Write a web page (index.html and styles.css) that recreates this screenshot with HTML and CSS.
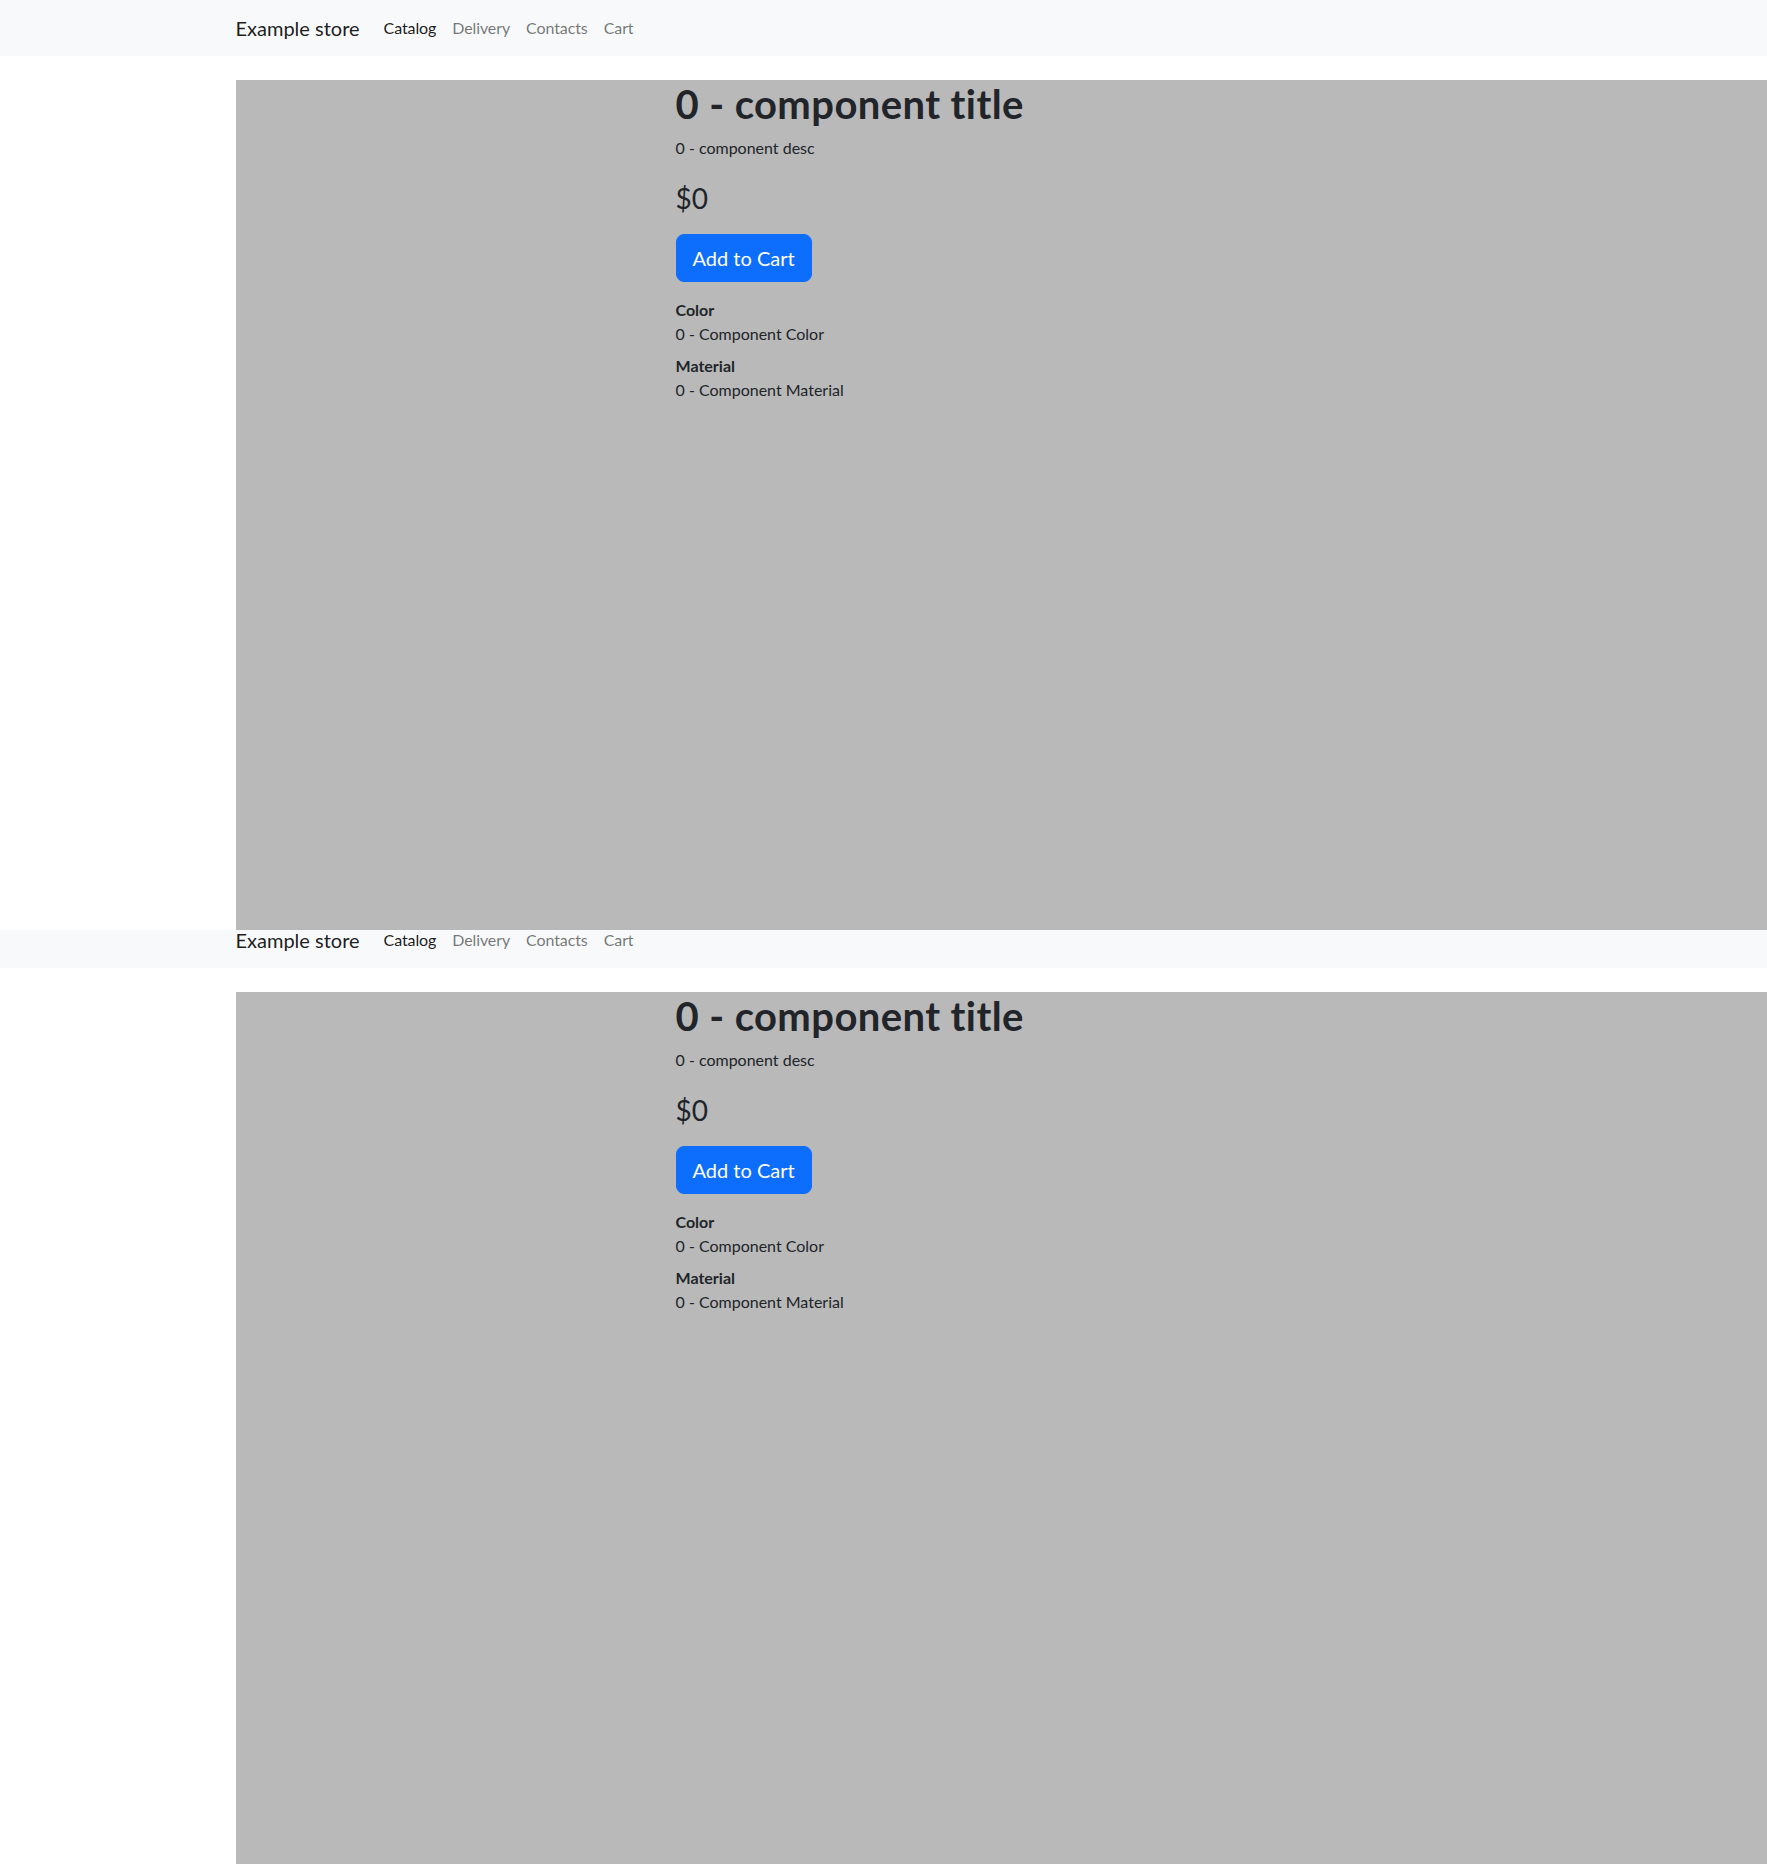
FILE: index.html
```html
<!DOCTYPE html>
<html lang="en">
<head>
<meta charset="utf-8">
<title>Example store</title>
<link rel="stylesheet" href="styles.css">
</head>
<body>
<div class="viewport viewport-first">
  <div class="app">
    <nav class="navbar">
      <div class="container nav-inner">
        <a class="brand" href="#">Example store</a>
        <ul class="nav">
          <li><a class="nav-link active" href="#">Catalog</a></li>
          <li><a class="nav-link" href="#">Delivery</a></li>
          <li><a class="nav-link" href="#">Contacts</a></li>
          <li><a class="nav-link" href="#">Cart</a></li>
        </ul>
      </div>
    </nav>
    <main class="page">
      <section class="product">
        <div class="info">
          <h1 class="title">0 - component title</h1>
          <p class="desc">0 - component desc</p>
          <h3 class="price">$0</h3>
          <button class="btn" type="button">Add to Cart</button>
          <dl class="props">
            <dt>Color</dt>
            <dd>0 - Component Color</dd>
            <dt>Material</dt>
            <dd>0 - Component Material</dd>
          </dl>
        </div>
      </section>
    </main>
  </div>
</div>
<div class="viewport viewport-second">
  <div class="app app-scrolled">
    <nav class="navbar">
      <div class="container nav-inner">
        <a class="brand" href="#">Example store</a>
        <ul class="nav">
          <li><a class="nav-link active" href="#">Catalog</a></li>
          <li><a class="nav-link" href="#">Delivery</a></li>
          <li><a class="nav-link" href="#">Contacts</a></li>
          <li><a class="nav-link" href="#">Cart</a></li>
        </ul>
      </div>
    </nav>
    <main class="page">
      <section class="product">
        <div class="info">
          <h1 class="title">0 - component title</h1>
          <p class="desc">0 - component desc</p>
          <h3 class="price">$0</h3>
          <button class="btn" type="button">Add to Cart</button>
          <dl class="props">
            <dt>Color</dt>
            <dd>0 - Component Color</dd>
            <dt>Material</dt>
            <dd>0 - Component Material</dd>
          </dl>
        </div>
      </section>
    </main>
  </div>
</div>
</body>
</html>
```
FILE: styles.css
```css
* { box-sizing: border-box; }

html, body {
  margin: 0;
  padding: 0;
}

body {
  font-family: "Lato", "Noto Sans", sans-serif;
  font-size: 16px;
  line-height: 1.5;
  color: #212529;
  background: #fff;
}

.viewport {
  overflow: hidden;
}

.viewport-first {
  height: 930px;
}

.viewport-second {
  height: 934px;
}

.app-scrolled {
  margin-top: -18px;
}

.navbar {
  background: #f8f9fa;
  padding: 8px 0;
}

.container {
  width: 1320px;
  margin: 0 auto;
  padding: 0 12px;
}

.nav-inner {
  display: flex;
  align-items: center;
}

.brand {
  font-size: 20px;
  line-height: 30px;
  padding: 5px 0;
  margin-right: 16px;
  color: rgba(0, 0, 0, 0.9);
  text-decoration: none;
  white-space: nowrap;
}

.nav {
  display: flex;
  list-style: none;
  margin: 0;
  padding: 0;
}

.nav-link {
  display: block;
  padding: 8px 8px;
  font-size: 16px;
  line-height: 24px;
  letter-spacing: -0.1px;
  color: rgba(0, 0, 0, 0.55);
  text-decoration: none;
}

.nav-link.active {
  color: rgba(0, 0, 0, 0.9);
}

.page {
  margin-top: 24px;
  padding-left: calc((100% - 1320px) / 2 + 12px);
}

.product {
  background: #b9b9b9;
  height: 1000px;
  padding-left: 440px;
}

.info {
  display: flex;
  flex-direction: column;
  align-items: flex-start;
}

.title {
  margin: 0 0 8px;
  font-size: 40px;
  line-height: 1.2;
  font-weight: 700;
  letter-spacing: 0.4px;
}

.desc {
  margin: 0 0 16px;
}

.price {
  margin: 6px 0 18px;
  font-size: 28px;
  line-height: 1.2;
  font-weight: 400;
}

.btn {
  font-family: inherit;
  font-size: 20px;
  line-height: 30px;
  padding: 8px 16px;
  color: #fff;
  background: #0d6efd;
  border: 1px solid #0d6efd;
  border-radius: 8px;
  cursor: pointer;
}

.props {
  margin: 16px 0 16px;
}

.props dt {
  font-weight: 700;
}

.props dd {
  margin: 0 0 8px;
}
```
